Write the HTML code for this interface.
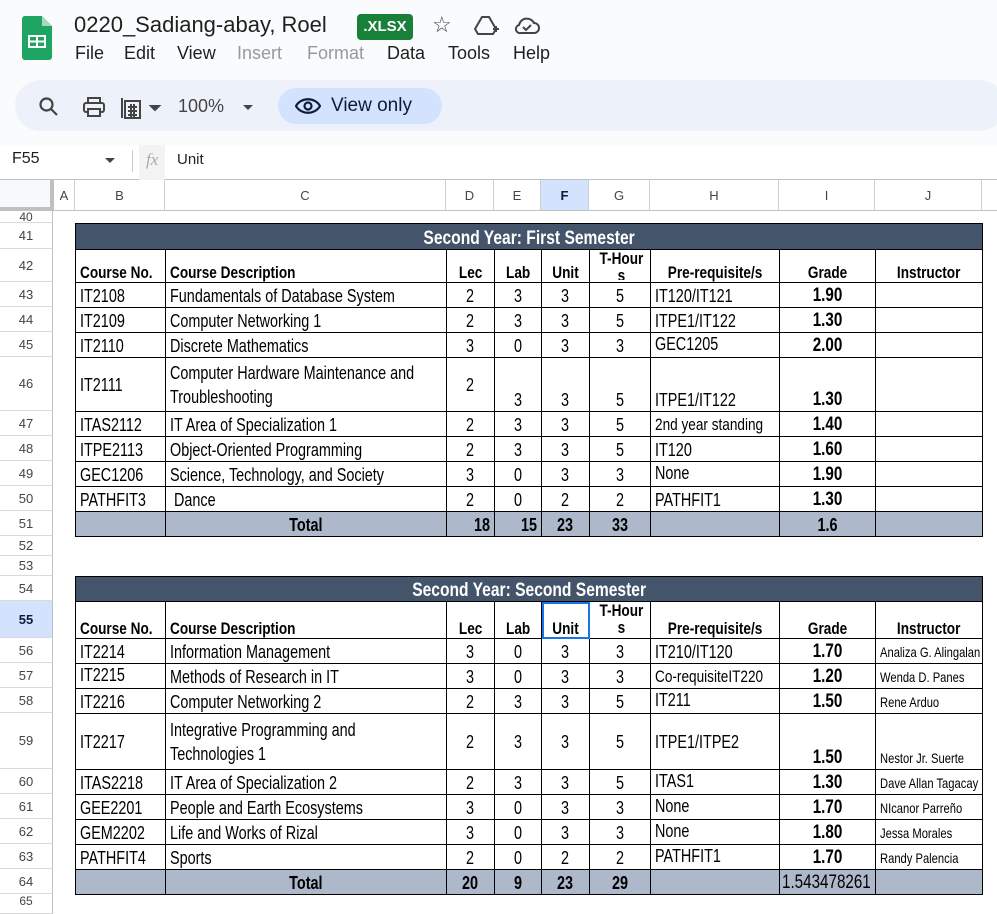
<!DOCTYPE html>
<html><head><meta charset="utf-8"><style>
*{box-sizing:border-box;margin:0;padding:0}
body{width:997px;height:904px;overflow:hidden;position:relative;background:#fff;font-family:"Liberation Sans",Arial,sans-serif;color:#1f1f1f}
.top{position:absolute;left:0;top:0;width:997px;height:145px;background:#f9fbfd}
.abs{position:absolute}
.menu{position:absolute;top:43px;font-size:18px;color:#1f1f1f}
.pill{position:absolute;left:15px;top:80px;width:990px;height:51px;border-radius:26px;background:#edf2fa}
.rh{position:absolute;left:0;width:53px;border-bottom:1px solid #d9d9d9;border-right:1px solid #c0c0c0;font-size:13px;color:#444;text-align:center;display:flex;align-items:center;justify-content:center;background:#fff}
.ch{position:absolute;top:180px;height:31px;border-right:1px solid #d0d0d0;border-bottom:1px solid #c0c0c0;font-size:13px;color:#444;display:flex;align-items:center;justify-content:center;background:#fff}
table{position:absolute;left:75px;border-collapse:collapse;table-layout:fixed}
td{border:1px solid #000;padding:0 4px;vertical-align:bottom;font-size:18px;line-height:22px;white-space:nowrap;overflow:hidden;color:#000}
td.c{text-align:center}
.s{display:inline-block;transform:scaleX(.8);transform-origin:left bottom}
td.c .s{transform-origin:center bottom}
td.r{text-align:right}
td.r .s{transform-origin:right bottom}
.hd td{font-weight:bold;font-size:17px;line-height:19px}
.dk td{background:#44546a;color:#fff;font-weight:bold;font-size:19.5px;text-align:center;line-height:22px}
.tot td{background:#adb9ca;font-weight:bold;font-size:18px}
.g{font-weight:bold;font-size:19px}
.in{font-size:14px}
.th{height:30px;overflow:hidden;line-height:17px;text-align:center}
.sm{font-size:17px}
</style></head><body>
<div class="top"></div>
<svg class="abs" style="left:22px;top:16px" width="30" height="44" viewBox="0 0 30 44"><path d="M3 0h17l10 10v31a3 3 0 0 1-3 3H3a3 3 0 0 1-3-3V3a3 3 0 0 1 3-3z" fill="#1fa463"/><path d="M20 0v10h10z" fill="#a8d9bd"/><rect x="6" y="19" width="18" height="13" fill="#fff"/><rect x="8" y="21" width="6" height="3.5" fill="#1fa463"/><rect x="16" y="21" width="6" height="3.5" fill="#1fa463"/><rect x="8" y="26.5" width="6" height="3.5" fill="#1fa463"/><rect x="16" y="26.5" width="6" height="3.5" fill="#1fa463"/></svg>
<div class="abs" style="left:74px;top:12px;font-size:22px;color:#1f1f1f">0220_Sadiang-abay, Roel</div>
<div class="abs" style="left:357px;top:14px;width:56px;height:26px;background:#188038;border-radius:4px;color:#fff;font-size:15px;font-weight:bold;text-align:center;line-height:26px">.XLSX</div>
<div class="abs" style="left:432px;top:12px;font-size:22px;color:#444">☆</div>
<svg class="abs" style="left:474px;top:15px" width="26" height="22" viewBox="0 0 26 22" fill="none" stroke="#444" stroke-width="2"><path d="M8 2h7l7 12-3 5H4l-3-5z"/><path d="M19 14h6M22 11v6"/></svg>
<svg class="abs" style="left:514px;top:15px" width="26" height="20" viewBox="0 0 26 20" fill="none" stroke="#444" stroke-width="2"><path d="M7 18h13a5 5 0 0 0 0-10 8 8 0 0 0-15 2 4 4 0 0 0 2 8z"/><path d="M9 12l3 3 5-5"/></svg>
<div class="menu" style="left:75px">File</div>
<div class="menu" style="left:124px">Edit</div>
<div class="menu" style="left:177px">View</div>
<div class="menu" style="left:237px;color:#999">Insert</div>
<div class="menu" style="left:307px;color:#999">Format</div>
<div class="menu" style="left:387px">Data</div>
<div class="menu" style="left:448px">Tools</div>
<div class="menu" style="left:513px">Help</div>
<div class="pill"></div>
<svg class="abs" style="left:38px;top:96px" width="22" height="22" viewBox="0 0 22 22" fill="none" stroke="#444" stroke-width="2.2"><circle cx="8.5" cy="8.5" r="6"/><path d="M13 13l6 6"/></svg>
<svg class="abs" style="left:82px;top:96px" width="24" height="22" viewBox="0 0 24 22" fill="none" stroke="#444" stroke-width="2"><rect x="6" y="2" width="12" height="5"/><rect x="2" y="7" width="20" height="9" rx="2"/><rect x="6" y="13" width="12" height="7" fill="#edf2fa"/></svg>
<svg class="abs" style="left:120px;top:96px" width="44" height="24" viewBox="0 0 44 24" fill="none" stroke="#444" stroke-width="2"><rect x="5" y="5" width="15" height="17"/><path d="M2 2v20M8 11h9M8 15h9M8 19h9M11 8v13M14 8v13"/><path d="M31 10l4 4 4-4z" fill="#444"/></svg>
<div class="abs" style="left:178px;top:96px;font-size:18px;color:#444">100%</div>
<svg class="abs" style="left:242px;top:104px" width="12" height="8"><path d="M1 1l5 5 5-5z" fill="#444"/></svg>
<div class="abs" style="left:278px;top:88px;width:164px;height:36px;border-radius:18px;background:#d3e3fd"></div>
<svg class="abs" style="left:295px;top:96px" width="26" height="20" viewBox="0 0 26 20" fill="none" stroke="#0b1d3a" stroke-width="2.2"><path d="M1 10c5-9 19-9 24 0-5 9-19 9-24 0z"/><circle cx="13" cy="10" r="3.5"/></svg>
<div class="abs" style="left:331px;top:95px;font-size:19px;color:#0b1d3a">View only</div>
<div class="abs" style="left:0;top:145px;width:997px;height:35px;background:#fff;border-bottom:1px solid #c0c0c0"></div>
<div class="abs" style="left:12px;top:150px;font-size:16px;color:#1f1f1f">F55</div>
<svg class="abs" style="left:104px;top:157px" width="12" height="8"><path d="M1 1l5 5 5-5z" fill="#444"/></svg>
<div class="abs" style="left:132px;top:150px;width:1px;height:22px;background:#ccc"></div>
<div class="abs" style="left:139px;top:145px;width:26px;height:35px;background:#f3f3f3"></div>
<div class="abs" style="left:146px;top:150px;font-size:17px;color:#aaa;font-style:italic;font-family:'Liberation Serif',serif">fx</div>
<div class="abs" style="left:177px;top:151px;font-size:15px;color:#1f1f1f">Unit</div>
<div class="abs" style="left:0;top:180px;width:54px;height:31px;background:#f8f9fa;border-right:4px solid #c0c0c0;border-bottom:4px solid #c0c0c0"></div>
<div class="ch" style="left:54px;width:21px">A</div>
<div class="ch" style="left:75px;width:90px">B</div>
<div class="ch" style="left:165px;width:281px">C</div>
<div class="ch" style="left:446px;width:48px">D</div>
<div class="ch" style="left:494px;width:47px">E</div>
<div class="ch" style="left:541px;width:48px;background:#d3e3fd;font-weight:bold;color:#0b1d3a">F</div>
<div class="ch" style="left:589px;width:61px">G</div>
<div class="ch" style="left:650px;width:129px">H</div>
<div class="ch" style="left:779px;width:96px">I</div>
<div class="ch" style="left:875px;width:107px">J</div>
<div class="ch" style="left:982px;width:20px"></div>
<div class="rh" style="top:211px;height:12px;align-items:flex-end;overflow:hidden;font-size:12px;line-height:10px">40</div>
<div class="rh" style="top:223px;height:26px">41</div>
<div class="rh" style="top:249px;height:33px">42</div>
<div class="rh" style="top:282px;height:25px">43</div>
<div class="rh" style="top:307px;height:25px">44</div>
<div class="rh" style="top:332px;height:25px">45</div>
<div class="rh" style="top:357px;height:54px">46</div>
<div class="rh" style="top:411px;height:25px">47</div>
<div class="rh" style="top:436px;height:25px">48</div>
<div class="rh" style="top:461px;height:25px">49</div>
<div class="rh" style="top:486px;height:25px">50</div>
<div class="rh" style="top:511px;height:25px">51</div>
<div class="rh" style="top:536px;height:20px">52</div>
<div class="rh" style="top:556px;height:20px">53</div>
<div class="rh" style="top:576px;height:25px">54</div>
<div class="rh" style="top:601px;height:37px;background:#d3e3fd;font-weight:bold;color:#0b1d3a">55</div>
<div class="rh" style="top:638px;height:25px">56</div>
<div class="rh" style="top:663px;height:25px">57</div>
<div class="rh" style="top:688px;height:25px">58</div>
<div class="rh" style="top:713px;height:56px">59</div>
<div class="rh" style="top:769px;height:25px">60</div>
<div class="rh" style="top:794px;height:25px">61</div>
<div class="rh" style="top:819px;height:25px">62</div>
<div class="rh" style="top:844px;height:25px">63</div>
<div class="rh" style="top:869px;height:25px">64</div>
<div class="rh" style="top:894px;height:20px;align-items:flex-start;font-size:12px">65</div>

<table style="top:223px;width:907px">
<colgroup><col style="width:90px"><col style="width:281px"><col style="width:48px"><col style="width:47px"><col style="width:48px"><col style="width:61px"><col style="width:129px"><col style="width:96px"><col style="width:107px"></colgroup>
<tr class="dk" style="height:26px"><td colspan="9"><span class="s" style="transform-origin:center bottom">Second Year: First Semester</span></td></tr>
<tr class="hd" style="height:33px"><td><span class="s">Course No.</span></td><td><span class="s">Course Description</span></td><td class="c"><span class="s">Lec</span></td><td class="c"><span class="s">Lab</span></td><td class="c"><span class="s">Unit</span></td><td class="c" style="vertical-align:top"><div class="th"><span class="s" style="transform-origin:center top">T-Hour<br>s</span></div></td><td class="c"><span class="s">Pre-requisite/s</span></td><td class="c"><span class="s">Grade</span></td><td class="c"><span class="s">Instructor</span></td></tr>
<tr style="height:25px"><td><span class="s">IT2108</span></td><td><span class="s">Fundamentals of Database System</span></td><td class="c"><span class="s">2</span></td><td class="c"><span class="s">3</span></td><td class="c"><span class="s">3</span></td><td class="c"><span class="s">5</span></td><td><span class="s">IT120/IT121</span></td><td class="c g"><span class="s">1.90</span></td><td></td></tr>
<tr style="height:25px"><td><span class="s">IT2109</span></td><td><span class="s">Computer Networking 1</span></td><td class="c"><span class="s">2</span></td><td class="c"><span class="s">3</span></td><td class="c"><span class="s">3</span></td><td class="c"><span class="s">5</span></td><td><span class="s">ITPE1/IT122</span></td><td class="c g"><span class="s">1.30</span></td><td></td></tr>
<tr style="height:25px"><td><span class="s">IT2110</span></td><td><span class="s">Discrete Mathematics</span></td><td class="c"><span class="s">3</span></td><td class="c"><span class="s">0</span></td><td class="c"><span class="s">3</span></td><td class="c"><span class="s">3</span></td><td style="vertical-align:top"><span class="s">GEC1205</span></td><td class="c g"><span class="s">2.00</span></td><td></td></tr>
<tr style="height:54px"><td style="vertical-align:middle"><span class="s">IT2111</span></td><td style="line-height:24px;vertical-align:middle"><span class="s">Computer Hardware Maintenance and<br>Troubleshooting</span></td><td class="c" style="vertical-align:middle"><span class="s">2</span></td><td class="c"><span class="s">3</span></td><td class="c"><span class="s">3</span></td><td class="c"><span class="s">5</span></td><td><span class="s">ITPE1/IT122</span></td><td class="c g"><span class="s">1.30</span></td><td></td></tr>
<tr style="height:25px"><td><span class="s">ITAS2112</span></td><td><span class="s">IT Area of Specialization 1</span></td><td class="c"><span class="s">2</span></td><td class="c"><span class="s">3</span></td><td class="c"><span class="s">3</span></td><td class="c"><span class="s">5</span></td><td class="sm"><span class="s">2nd year standing</span></td><td class="c g"><span class="s">1.40</span></td><td></td></tr>
<tr style="height:25px"><td><span class="s">ITPE2113</span></td><td><span class="s">Object-Oriented Programming</span></td><td class="c"><span class="s">2</span></td><td class="c"><span class="s">3</span></td><td class="c"><span class="s">3</span></td><td class="c"><span class="s">5</span></td><td><span class="s">IT120</span></td><td class="c g"><span class="s">1.60</span></td><td></td></tr>
<tr style="height:25px"><td><span class="s">GEC1206</span></td><td><span class="s">Science, Technology, and Society</span></td><td class="c"><span class="s">3</span></td><td class="c"><span class="s">0</span></td><td class="c"><span class="s">3</span></td><td class="c"><span class="s">3</span></td><td style="vertical-align:top"><span class="s">None</span></td><td class="c g"><span class="s">1.90</span></td><td></td></tr>
<tr style="height:25px"><td><span class="s">PATHFIT3</span></td><td><span class="s">&nbsp;Dance</span></td><td class="c"><span class="s">2</span></td><td class="c"><span class="s">0</span></td><td class="c"><span class="s">2</span></td><td class="c"><span class="s">2</span></td><td><span class="s">PATHFIT1</span></td><td class="c g"><span class="s">1.30</span></td><td></td></tr>
<tr class="tot" style="height:25px"><td></td><td class="c"><span class="s">Total</span></td><td class="r"><span class="s">18</span></td><td class="r"><span class="s">15</span></td><td class="c"><span class="s">23</span></td><td class="c"><span class="s">33</span></td><td></td><td class="c"><span class="s">1.6</span></td><td></td></tr>
</table>

<table style="top:576px;width:907px">
<colgroup><col style="width:90px"><col style="width:281px"><col style="width:48px"><col style="width:47px"><col style="width:48px"><col style="width:61px"><col style="width:129px"><col style="width:96px"><col style="width:107px"></colgroup>
<tr class="dk" style="height:25px"><td colspan="9"><span class="s" style="transform-origin:center bottom">Second Year: Second Semester</span></td></tr>
<tr class="hd" style="height:37px"><td><span class="s">Course No.</span></td><td><span class="s">Course Description</span></td><td class="c"><span class="s">Lec</span></td><td class="c"><span class="s">Lab</span></td><td class="c" style="outline:2px solid #1a73e8;outline-offset:-2px"><span class="s">Unit</span></td><td class="c" style="vertical-align:top"><div class="th" style="height:34px"><span class="s" style="transform-origin:center top">T-Hour<br>s</span></div></td><td class="c"><span class="s">Pre-requisite/s</span></td><td class="c"><span class="s">Grade</span></td><td class="c"><span class="s">Instructor</span></td></tr>
<tr style="height:25px"><td><span class="s">IT2214</span></td><td><span class="s">Information Management</span></td><td class="c"><span class="s">3</span></td><td class="c"><span class="s">0</span></td><td class="c"><span class="s">3</span></td><td class="c"><span class="s">3</span></td><td><span class="s">IT210/IT120</span></td><td class="c g"><span class="s">1.70</span></td><td class="in"><span class="s">Analiza G. Alingalan</span></td></tr>
<tr style="height:25px"><td style="vertical-align:top"><span class="s">IT2215</span></td><td><span class="s">Methods of Research in IT</span></td><td class="c"><span class="s">3</span></td><td class="c"><span class="s">0</span></td><td class="c"><span class="s">3</span></td><td class="c"><span class="s">3</span></td><td class="sm"><span class="s">Co-requisiteIT220</span></td><td class="c g"><span class="s">1.20</span></td><td class="in"><span class="s">Wenda D. Panes</span></td></tr>
<tr style="height:25px"><td><span class="s">IT2216</span></td><td><span class="s">Computer Networking 2</span></td><td class="c"><span class="s">2</span></td><td class="c"><span class="s">3</span></td><td class="c"><span class="s">3</span></td><td class="c"><span class="s">5</span></td><td style="vertical-align:top"><span class="s">IT211</span></td><td class="c g"><span class="s">1.50</span></td><td class="in"><span class="s">Rene Arduo</span></td></tr>
<tr style="height:56px"><td style="vertical-align:middle"><span class="s">IT2217</span></td><td style="line-height:24px;vertical-align:middle"><span class="s">Integrative Programming and<br>Technologies 1</span></td><td class="c" style="vertical-align:middle"><span class="s">2</span></td><td class="c" style="vertical-align:middle"><span class="s">3</span></td><td class="c" style="vertical-align:middle"><span class="s">3</span></td><td class="c" style="vertical-align:middle"><span class="s">5</span></td><td style="vertical-align:middle"><span class="s">ITPE1/ITPE2</span></td><td class="c g"><span class="s">1.50</span></td><td class="in"><span class="s">Nestor Jr. Suerte</span></td></tr>
<tr style="height:25px"><td><span class="s">ITAS2218</span></td><td><span class="s">IT Area of Specialization 2</span></td><td class="c"><span class="s">2</span></td><td class="c"><span class="s">3</span></td><td class="c"><span class="s">3</span></td><td class="c"><span class="s">5</span></td><td style="vertical-align:top"><span class="s">ITAS1</span></td><td class="c g"><span class="s">1.30</span></td><td class="in"><span class="s">Dave Allan Tagacay</span></td></tr>
<tr style="height:25px"><td><span class="s">GEE2201</span></td><td><span class="s">People and Earth Ecosystems</span></td><td class="c"><span class="s">3</span></td><td class="c"><span class="s">0</span></td><td class="c"><span class="s">3</span></td><td class="c"><span class="s">3</span></td><td style="vertical-align:top"><span class="s">None</span></td><td class="c g"><span class="s">1.70</span></td><td class="in"><span class="s">NIcanor Parreño</span></td></tr>
<tr style="height:25px"><td><span class="s">GEM2202</span></td><td><span class="s">Life and Works of Rizal</span></td><td class="c"><span class="s">3</span></td><td class="c"><span class="s">0</span></td><td class="c"><span class="s">3</span></td><td class="c"><span class="s">3</span></td><td style="vertical-align:top"><span class="s">None</span></td><td class="c g"><span class="s">1.80</span></td><td class="in"><span class="s">Jessa Morales</span></td></tr>
<tr style="height:25px"><td><span class="s">PATHFIT4</span></td><td><span class="s">Sports</span></td><td class="c"><span class="s">2</span></td><td class="c"><span class="s">0</span></td><td class="c"><span class="s">2</span></td><td class="c"><span class="s">2</span></td><td style="vertical-align:top"><span class="s">PATHFIT1</span></td><td class="c g"><span class="s">1.70</span></td><td class="in"><span class="s">Randy Palencia</span></td></tr>
<tr class="tot" style="height:25px"><td></td><td class="c"><span class="s">Total</span></td><td class="c"><span class="s">20</span></td><td class="c"><span class="s">9</span></td><td class="c"><span class="s">23</span></td><td class="c"><span class="s">29</span></td><td></td><td style="font-weight:normal;font-size:19px;padding:0 2px"><span class="s">1.543478261</span></td><td></td></tr>
</table>
</body></html>
